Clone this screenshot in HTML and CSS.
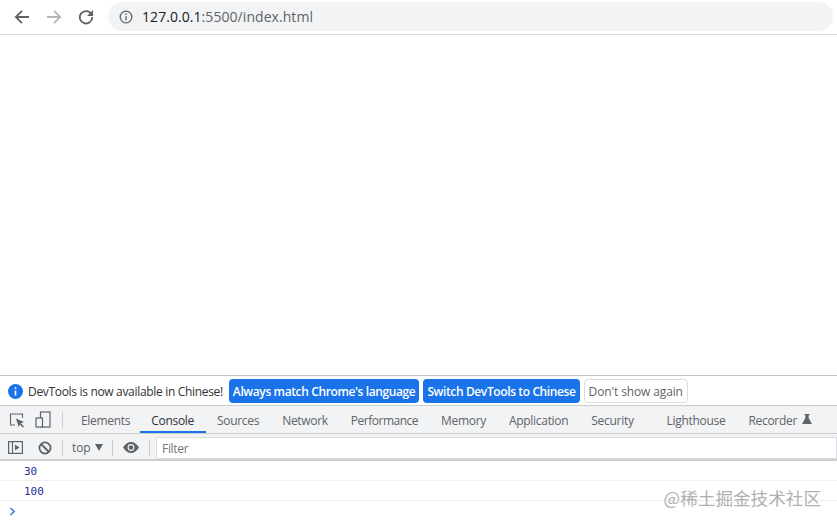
FILE: index.html
```html
<!DOCTYPE html>
<html lang="en">
<head>
<meta charset="utf-8">
<title>index</title>
<link rel="stylesheet" href="styles.css">
</head>
<body>
<header class="browser">
  <svg class="nav-icon" width="16" height="16" viewBox="0 0 16 16"><path d="M15 8H2.500M8 1.800 1.800 8 8 14.200" fill="none" stroke="#5f6368" stroke-width="1.800"/></svg>
  <svg class="nav-icon" width="16" height="16" viewBox="0 0 16 16"><path d="M1 8h12.500M8 1.800 14.200 8 8 14.200" fill="none" stroke="#b4b6b9" stroke-width="1.800"/></svg>
  <svg class="nav-icon" width="16" height="16" viewBox="0 0 16 16"><path d="M13.400 5.200A6.200 6.200 0 1 0 14.200 8" fill="none" stroke="#5f6368" stroke-width="1.800"/><path d="M15 1v6H9z" fill="#5f6368"/></svg>
  <div class="omnibox">
    <svg width="14" height="14" viewBox="0 0 14 14"><circle cx="7" cy="7" r="5.800" fill="none" stroke="#5f6368" stroke-width="1.300"/><path d="M7 6.200v4M7 3.600v1.500" stroke="#5f6368" stroke-width="1.400"/></svg>
    <span class="url">127.0.0.1<span class="url-rest">:5500/index.html</span></span>
  </div>
</header>
<main class="page"></main>
<section class="devtools">
  <div class="infobar">
    <svg class="info" width="15" height="15" viewBox="0 0 15 15"><circle cx="7.500" cy="7.500" r="7.500" fill="#1a73e8"/><path d="M7.500 6.500v5M7.500 3.300v1.800" stroke="#fff" stroke-width="1.600"/></svg>
    <span class="info-text">DevTools is now available in Chinese!</span>
    <button class="btn primary">Always match Chrome's language</button>
    <button class="btn primary">Switch DevTools to Chinese</button>
    <button class="btn plain">Don't show again</button>
  </div>
  <nav class="tabs">
    <svg class="tool first" width="16" height="16" viewBox="0 0 16 16"><path d="M6 13H1.500V2h12v4" fill="none" stroke="#5f6368" stroke-width="1.100"/><path d="M7 6.500 15 10l-3.200 1.200L15 14.500 13.800 15.600l-3-3.200L9.600 15z" fill="#5f6368"/></svg>
    <svg class="tool" width="16" height="18" viewBox="0 0 16 18"><rect x="5.500" y="1" width="9.500" height="15" fill="none" stroke="#5f6368" stroke-width="1.200"/><rect x="1" y="7" width="6.500" height="9" fill="#f1f3f4" stroke="#5f6368" stroke-width="1.200"/></svg>
    <span class="sep"></span>
    <span class="tab t-elements">Elements</span>
    <span class="tab active">Console</span>
    <span class="tab t-sources">Sources</span>
    <span class="tab t-next">Network</span>
    <span class="tab t-next t-perf">Performance</span>
    <span class="tab t-next">Memory</span>
    <span class="tab t-next">Application</span>
    <span class="tab t-next">Security</span>
    <span class="tab t-light">Lighthouse</span>
    <span class="tab t-next">Recorder</span>
    <svg class="flask" width="10" height="10" viewBox="0 0 10 10"><path d="M2.500 0h5v1.200H6.600V4L10 10H0l3.400-6V1.200H2.500z" fill="#5f6368"/></svg>
  </nav>
  <div class="filterbar">
    <svg class="fb-icon" width="15" height="13" viewBox="0 0 15 13"><rect x=".6" y=".6" width="13.800" height="11.800" fill="none" stroke="#5f6368" stroke-width="1.200"/><path d="M4.500 1v11" stroke="#5f6368" stroke-width="1.200"/><path d="M7 3.500 11.500 6.500 7 9.500z" fill="#5f6368"/></svg>
    <svg class="fb-icon block" width="14" height="14" viewBox="0 0 14 14"><circle cx="7" cy="7" r="5.600" fill="none" stroke="#5f6368" stroke-width="1.800"/><path d="M3 3l8 8" stroke="#5f6368" stroke-width="1.800"/></svg>
    <span class="sep"></span>
    <span class="context">top</span>
    <span class="caret"></span>
    <span class="sep sep-b"></span>
    <svg class="eye" width="16" height="11" viewBox="0 0 16 11"><path d="M0 5.500C2 2 5 0 8 0s6 2 8 5.500C14 9 11 11 8 11S2 9 0 5.500z" fill="#5f6368"/><circle cx="8" cy="5.500" r="3.400" fill="#f1f3f4"/><circle cx="8" cy="5.500" r="2.200" fill="#5f6368"/></svg>
    <span class="sep sep-c"></span>
    <div class="filter">Filter</div>
  </div>
  <div class="console">
    <div class="line">30</div>
    <div class="line">100</div>
    <div class="prompt"><svg width="7" height="9" viewBox="0 0 7 9"><path d="M1.500 1 5.200 4.500 1.500 8" fill="none" stroke="#3b78e7" stroke-width="1.500"/></svg></div>
    <div class="watermark">@稀土掘金技术社区</div>
  </div>
</section>
</body>
</html>
```
FILE: styles.css
```css
* { box-sizing: border-box; }
html, body { margin: 0; height: 100%; }
body {
  width: 837px; height: 524px; overflow: hidden;
  display: flex; flex-direction: column;
  font-family: "Open Sans", "Liberation Sans", sans-serif;
  background: #fff;
}
.browser {
  height: 35px; flex: none; display: flex; align-items: center;
  border-bottom: 1px solid #dadce0; padding-left: 14px; padding-bottom: 1px; background: #fff;
}
.nav-icon { margin-right: 16px; flex: none; }
.omnibox {
  width: 725px; height: 29px; margin-left: -2px;
  background: #f1f3f4; border-radius: 15px;
  display: flex; align-items: center; padding-left: 11px; gap: 9px;
}
.url { font: 14px "Open Sans", sans-serif; color: #202124; letter-spacing: .06px; }
.url-rest { color: #5f6368; }
.page { flex: 1; }
.devtools { flex: none; height: 149px; display: flex; flex-direction: column; }
.infobar {
  height: 31px; flex: none; border-top: 1px solid #c4c6c9; border-bottom: 1px solid #cbcdd0;
  display: flex; align-items: center; padding: 1px 0 0 8px;
}
.info { margin-right: 5px; flex: none; }
.info-text {
  font: 12px "Open Sans", sans-serif; letter-spacing: -.32px; color: #303134;
  margin-right: 6px; white-space: nowrap;
}
.btn {
  height: 24px; border-radius: 4px; padding: 0 4px; margin-right: 4px;
  font: 600 12px "Open Sans", sans-serif; white-space: nowrap;
}
.primary { background: #1a73e8; color: #fff; border: 0; letter-spacing: -.38px; }
.plain { background: #fff; color: #5f6368; border: 1px solid #dadce0; font-weight: 400; letter-spacing: -.13px; }
.tabs {
  height: 28px; flex: none; display: flex; align-items: center;
  background: #f1f3f4; border-bottom: 1px solid #cbcdd0; padding: 1px 0 0 9px;
}
.tool { flex: none; }
.tool.first { margin-right: 10px; }
.sep { width: 1px; height: 16px; background: #ccc; flex: none; margin: 0 6px 0 11px; }
.tab {
  font: 12px "Open Sans", sans-serif; letter-spacing: -.3px; color: #5f6368; height: 100%;
  display: flex; align-items: center; white-space: nowrap;
}
.active { color: #303134; border-bottom: 2px solid #1a73e8; padding: 2px 12px 0 11px; }
.t-elements { margin-left: 12px; margin-right: 10px; }
.t-sources { margin-left: 11px; }
.t-next { margin-left: 23px; }
.t-perf { letter-spacing: -.5px; }
.t-light { margin-left: 33px; }
.flask { margin-left: 5px; margin-bottom: 3px; flex: none; }
.filterbar {
  height: 27px; flex: none; display: flex; align-items: center;
  background: #f1f3f4; border-bottom: 2px solid #cbcdd0; padding: 2px 0 0 8px;
}
.fb-icon { flex: none; margin-right: 15px; }
.fb-icon.block { margin-right: 0; }
.filterbar .sep { margin: 0 9px 0 10px; }
.context { font: 12px "Open Sans", sans-serif; letter-spacing: -.1px; color: #5f6368; width: 18px; }
.caret {
  width: 0; height: 0; margin-left: 5px;
  border: 4px solid transparent; border-top: 7px solid #5f6368; border-bottom: 0;
}
.filterbar .sep-b { margin: 0 10px 0 9px; }
.eye { flex: none; }
.filterbar .sep-c { margin: 0 6px 0 10px; }
.filter {
  flex: 1; height: 22px; background: #fff; border: 1px solid #dadce0; border-radius: 2px 0 0 2px;
  font: 12px "Open Sans", sans-serif; letter-spacing: -.3px; color: #757575; padding: 1px 0 0 5px;
  display: flex; align-items: center;
}
.console { flex: 1; position: relative; background: #fff; }
.line {
  height: 20px; border-bottom: 1px solid #f0f0f0; padding: 4px 0 0 24px;
  font: 11px "DejaVu Sans Mono", monospace; color: #2a2a9c; line-height: 13px;
}
.prompt { padding: 6px 0 0 9px; line-height: 0; }
.watermark {
  position: absolute; right: 16px; top: 24px;
  font: 17.600px "Noto Sans CJK SC", sans-serif; color: #b0b0b0; white-space: nowrap;
}
```
